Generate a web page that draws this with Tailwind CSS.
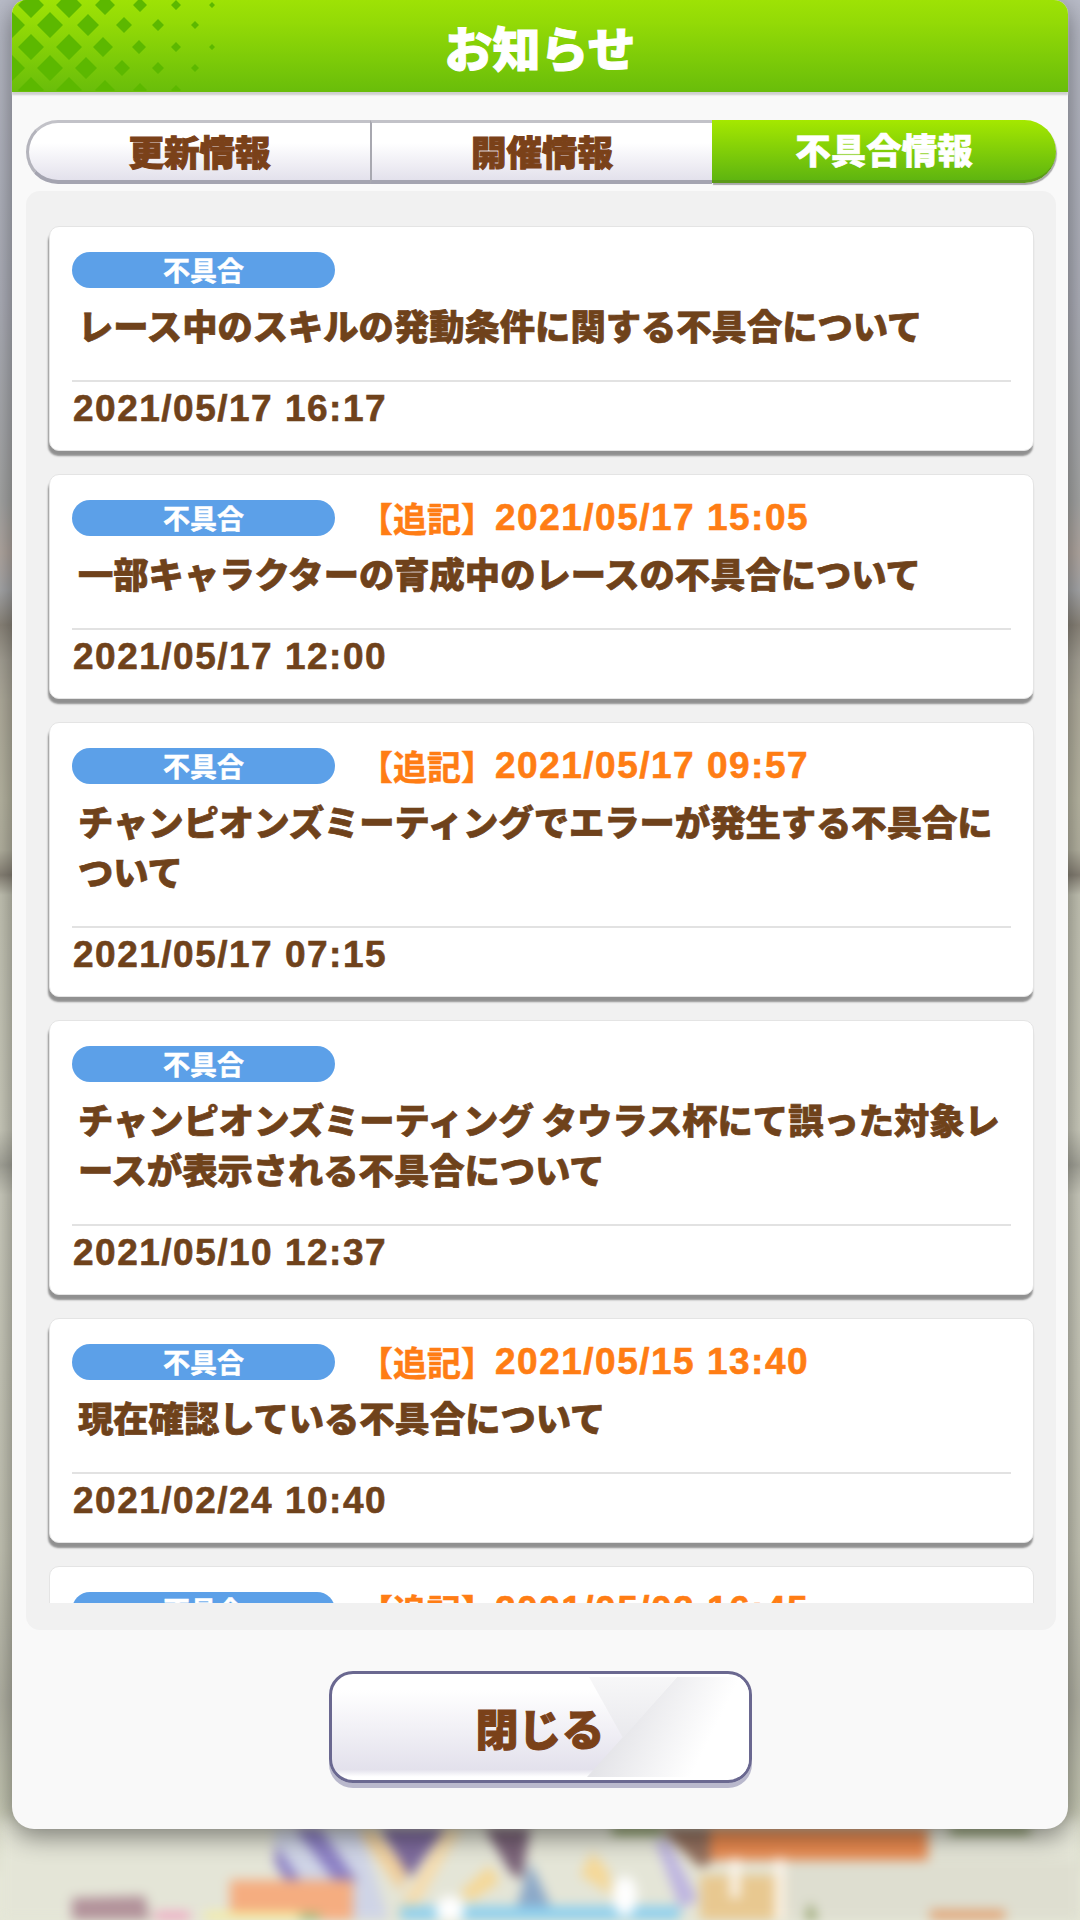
<!DOCTYPE html>
<html lang="ja">
<head>
  <meta charset="UTF-8">
  <title>お知らせ</title>
  <script src="https://cdn.jsdelivr.net/npm/@tailwindcss/browser@4"></script>
</head>
<body class="relative w-[1080px] h-[1920px] overflow-hidden font-['Noto_Sans_CJK_JP',sans-serif]">
  <!-- blurred game scene behind the dialog -->
  <div class="absolute inset-0 bg-[linear-gradient(to_bottom,#b9bcc8_0,#b0b2bc_300px,#a8a9a8_500px,#b5aba4_553px,#a9aaac_590px,#8d877c_625px,#a8a498_660px,#b4b0a0_700px,#bcbaa6_800px,#b8b6a4_850px,#8a8478_875px,#c8c8b8_895px,#cfcfc0_1130px,#a9a99e_1165px,#d0d0c2_1195px,#c8c8b8_1550px,#b6b6a8_1700px,#c6c8b4_1800px,#e6e8d8_1880px)]"></div>
  <svg class="absolute left-0 top-[1820px] blur-[6px]" width="1080" height="100" viewBox="0 0 1080 100">
    <rect x="-20" width="1120" height="120" fill="#e4e5d7"/>
    <rect x="780" y="40" width="300" height="80" fill="#deded0"/>
    <polygon points="275,8 360,8 392,110 345,110 290,62 275,42" fill="#cfd4e6"/>
    <polygon points="295,8 320,8 358,62 335,62" fill="#8c80c4"/>
    <polygon points="275,24 302,62 287,62 275,44" fill="#8c80c4"/>
    <polygon points="358,10 375,10 408,52 400,72" fill="#f0cf9c"/>
    <polygon points="380,8 445,8 410,58" fill="#7d6a9c"/>
    <polygon points="445,8 462,8 412,95 395,95" fill="#f5dcae"/>
    <polygon points="485,8 530,8 522,60 510,52" fill="#7a6378"/>
    <polygon points="530,42 510,110 562,110" fill="#8ba8c8"/>
    <polygon points="490,45 500,62 470,82 460,72" fill="#f5d898"/>
    <polygon points="592,32 608,50 612,75 580,55" fill="#f5d898"/>
    <polygon points="655,20 668,20 698,80 680,88" fill="#bdb4e0"/>
    <polygon points="660,8 722,8 712,42 700,48" fill="#93705e"/>
    <rect x="710" y="8" width="218" height="32" fill="#e88a50"/>
    <rect x="700" y="55" width="86" height="55" fill="#e8c890"/>
    <rect x="730" y="38" width="10" height="40" fill="#fbf4ea"/>
    <rect x="775" y="38" width="10" height="72" fill="#fbf4ea"/>
    <polygon points="230,60 353,60 353,110 230,94" fill="#f5ad80"/>
    <polygon points="72,78 145,76 152,110 72,110" fill="#b2929a"/>
    <rect x="400" y="86" width="280" height="24" fill="#8ccfee"/>
    <ellipse cx="450" cy="90" rx="14" ry="14" fill="#fff"/>
    <ellipse cx="625" cy="76" rx="12" ry="20" fill="#fff"/>
    <rect x="612" y="6" width="50" height="8" fill="#7a9050"/>
    <rect x="950" y="6" width="80" height="8" fill="#7d8f5a"/>
    <rect x="155" y="92" width="35" height="18" fill="#f0a0c0"/>
    <rect x="205" y="92" width="95" height="18" fill="#f5eda0"/>
    <rect x="300" y="94" width="20" height="16" fill="#8dbb70"/>
    <rect x="930" y="90" width="75" height="20" fill="#e0a070"/>
    <polygon points="810,82 822,110 803,110" fill="#8a9a60"/>
  </svg>

  <!-- dialog -->
  <div class="relative ml-[12px] w-[1056px] h-[1829px] bg-[#f9f9f9] rounded-b-[22px] rounded-t-[14px] flex flex-col shadow-[0_8px_26px_rgba(0,0,0,0.45)]">
    <div class="relative h-[92px] shrink-0 rounded-t-[14px] overflow-hidden flex items-center justify-center bg-[linear-gradient(to_bottom,#9ee205_0,#93da06_25%,#69bd0a_100%)] shadow-[0_3px_2px_#cfcfcf]">
      <svg class="absolute left-0 top-0" width="230" height="91" viewBox="12 0 230 91" fill="#5cb800">
        <path d="M31 -8l13 13-13 13-13-13zM69 -8l13 13-13 13-13-13zM105 -5l10 10-10 10-10-10zM140 -2l7 7-7 7-7-7zM176 0l5 5-5 5-5-5zM212 2l3 3-3 3-3-3z"/>
        <path d="M12 12l13 13-13 13-13-13zM50 12l13 13-13 13-13-13zM88 14l11 11-11 11-11-11zM124 17l8 8-8 8-8-8zM158 19l6 6-6 6-6-6zM195 21l4 4-4 4-4-4z"/>
        <path d="M31 34l13 13-13 13-13-13zM69 34l13 13-13 13-13-13zM103 37l10 10-10 10-10-10zM139 40l7 7-7 7-7-7zM176 42l5 5-5 5-5-5zM212 44l3 3-3 3-3-3z"/>
        <path d="M12 55l13 13-13 13-13-13zM50 55l13 13-13 13-13-13zM86 57l11 11-11 11-11-11zM122 60l8 8-8 8-8-8zM158 62l6 6-6 6-6-6zM195 64l4 4-4 4-4-4z"/>
        <path d="M31 77l13 13-13 13-13-13zM69 77l13 13-13 13-13-13zM105 80l10 10-10 10-10-10zM140 83l7 7-7 7-7-7zM176 85l5 5-5 5-5-5z"/>
      </svg>
      <h1 class="relative text-[48px] font-black text-white leading-none [-webkit-text-stroke:1px_#fff]">お知らせ</h1>
    </div>

    <!-- tabs -->
    <div class="mt-[28px] ml-[14px] mr-[12px] h-[64px] shrink-0 flex text-[35.5px] font-black leading-none">
      <div class="w-[344px] pb-[2px] flex items-center justify-center rounded-l-full border-t-[3px] border-b-[4px] border-l-[3px] border-t-[#c2c2c8] border-b-[#a4a4b0] border-l-[#b4b4bc] bg-[linear-gradient(to_bottom,#fff_35%,#e3e1ec_100%)] text-[#7a4119] [-webkit-text-stroke:1px_#7a4119]">更新情報</div>
      <div class="w-[342px] pb-[2px] flex items-center justify-center border-l-2 border-t-[3px] border-b-[4px] border-l-[#a8a8b0] border-t-[#c2c2c8] border-b-[#a4a4b0] bg-[linear-gradient(to_bottom,#fff_35%,#e3e1ec_100%)] text-[#7a4119] [-webkit-text-stroke:1px_#7a4119]">開催情報</div>
      <div class="w-[344px] h-[63px] pb-[2px] flex items-center justify-center rounded-r-full border-b-[3px] border-b-[#5b9a18] bg-[linear-gradient(to_bottom,#a5e800_0,#5fb510_100%)] text-white shadow-[1px_2px_1px_#a8a8a8] [-webkit-text-stroke:0.6px_#fff]">不具合情報</div>
    </div>

    <!-- notice list -->
    <div class="mt-[7px] ml-[14px] mr-[12px] h-[1439px] shrink-0 rounded-[14px] bg-[#f1f1f1]">
      <div class="h-[1412px] overflow-hidden pt-[35px] pl-[23px] pr-[22px] flex flex-col gap-[23px]">

        <article class="shrink-0 h-[225px] px-[22px] pt-[25px] rounded-[10px] bg-white border border-[#e4e4e4] shadow-[-1px_5px_2px_rgba(0,0,0,0.4)]">
          <div class="flex h-[36px] items-center">
            <span class="w-[263px] h-[36px] pb-[2px] rounded-full bg-[#5ca0e8] flex items-center justify-center text-white text-[27px] font-bold leading-none [-webkit-text-stroke:0.5px_#fff]">不具合</span>
          </div>
          <p class="mt-[12px] h-[80px] pl-[6px] text-[#6f421b] text-[35.3px] leading-[50px] font-black [-webkit-text-stroke:0.7px_#6f421b]">レース中のスキルの発動条件に関する不具合について</p>
          <p class="border-t-2 border-[#e2e2e2] h-[54px] pl-[1px] font-['Liberation_Sans',sans-serif] text-[#6f421b] text-[37px] tracking-[1.5px] font-bold leading-[54px] [-webkit-text-stroke:0.6px_#6f421b]">2021/05/17 16:17</p>
        </article>

        <article class="shrink-0 h-[225px] px-[22px] pt-[25px] rounded-[10px] bg-white border border-[#e4e4e4] shadow-[-1px_5px_2px_rgba(0,0,0,0.4)]">
          <div class="flex h-[36px] items-center">
            <span class="w-[263px] h-[36px] pb-[2px] rounded-full bg-[#5ca0e8] flex items-center justify-center text-white text-[27px] font-bold leading-none [-webkit-text-stroke:0.5px_#fff]">不具合</span>
            <span class="ml-[24px] pb-[1px] text-[#ff7d14] text-[34px] font-bold leading-none whitespace-nowrap [-webkit-text-stroke:0.5px_#ff7d14]">【追記】</span>
            <span class="pb-[1px] font-['Liberation_Sans',sans-serif] text-[#ff7d14] text-[37px] tracking-[1.5px] font-bold leading-none whitespace-nowrap [-webkit-text-stroke:0.6px_#ff7d14]">2021/05/17 15:05</span>
          </div>
          <p class="mt-[12px] h-[80px] pl-[6px] text-[#6f421b] text-[35.3px] leading-[50px] font-black [-webkit-text-stroke:0.7px_#6f421b]">一部キャラクターの育成中のレースの不具合について</p>
          <p class="border-t-2 border-[#e2e2e2] h-[54px] pl-[1px] font-['Liberation_Sans',sans-serif] text-[#6f421b] text-[37px] tracking-[1.5px] font-bold leading-[54px] [-webkit-text-stroke:0.6px_#6f421b]">2021/05/17 12:00</p>
        </article>

        <article class="shrink-0 h-[275px] px-[22px] pt-[25px] rounded-[10px] bg-white border border-[#e4e4e4] shadow-[-1px_5px_2px_rgba(0,0,0,0.4)]">
          <div class="flex h-[36px] items-center">
            <span class="w-[263px] h-[36px] pb-[2px] rounded-full bg-[#5ca0e8] flex items-center justify-center text-white text-[27px] font-bold leading-none [-webkit-text-stroke:0.5px_#fff]">不具合</span>
            <span class="ml-[24px] pb-[1px] text-[#ff7d14] text-[34px] font-bold leading-none whitespace-nowrap [-webkit-text-stroke:0.5px_#ff7d14]">【追記】</span>
            <span class="pb-[1px] font-['Liberation_Sans',sans-serif] text-[#ff7d14] text-[37px] tracking-[1.5px] font-bold leading-none whitespace-nowrap [-webkit-text-stroke:0.6px_#ff7d14]">2021/05/17 09:57</span>
          </div>
          <p class="mt-[12px] h-[130px] pl-[6px] text-[#6f421b] text-[35.3px] leading-[50px] font-black whitespace-nowrap [-webkit-text-stroke:0.7px_#6f421b]">チャンピオンズミーティングでエラーが発生する不具合に<br>ついて</p>
          <p class="border-t-2 border-[#e2e2e2] h-[54px] pl-[1px] font-['Liberation_Sans',sans-serif] text-[#6f421b] text-[37px] tracking-[1.5px] font-bold leading-[54px] [-webkit-text-stroke:0.6px_#6f421b]">2021/05/17 07:15</p>
        </article>

        <article class="shrink-0 h-[275px] px-[22px] pt-[25px] rounded-[10px] bg-white border border-[#e4e4e4] shadow-[-1px_5px_2px_rgba(0,0,0,0.4)]">
          <div class="flex h-[36px] items-center">
            <span class="w-[263px] h-[36px] pb-[2px] rounded-full bg-[#5ca0e8] flex items-center justify-center text-white text-[27px] font-bold leading-none [-webkit-text-stroke:0.5px_#fff]">不具合</span>
          </div>
          <p class="mt-[12px] h-[130px] pl-[6px] text-[#6f421b] text-[35.3px] leading-[50px] font-black whitespace-nowrap [-webkit-text-stroke:0.7px_#6f421b]">チャンピオンズミーティング タウラス杯にて誤った対象レ<br>ースが表示される不具合について</p>
          <p class="border-t-2 border-[#e2e2e2] h-[54px] pl-[1px] font-['Liberation_Sans',sans-serif] text-[#6f421b] text-[37px] tracking-[1.5px] font-bold leading-[54px] [-webkit-text-stroke:0.6px_#6f421b]">2021/05/10 12:37</p>
        </article>

        <article class="shrink-0 h-[225px] px-[22px] pt-[25px] rounded-[10px] bg-white border border-[#e4e4e4] shadow-[-1px_5px_2px_rgba(0,0,0,0.4)]">
          <div class="flex h-[36px] items-center">
            <span class="w-[263px] h-[36px] pb-[2px] rounded-full bg-[#5ca0e8] flex items-center justify-center text-white text-[27px] font-bold leading-none [-webkit-text-stroke:0.5px_#fff]">不具合</span>
            <span class="ml-[24px] pb-[1px] text-[#ff7d14] text-[34px] font-bold leading-none whitespace-nowrap [-webkit-text-stroke:0.5px_#ff7d14]">【追記】</span>
            <span class="pb-[1px] font-['Liberation_Sans',sans-serif] text-[#ff7d14] text-[37px] tracking-[1.5px] font-bold leading-none whitespace-nowrap [-webkit-text-stroke:0.6px_#ff7d14]">2021/05/15 13:40</span>
          </div>
          <p class="mt-[12px] h-[80px] pl-[6px] text-[#6f421b] text-[35.3px] leading-[50px] font-black [-webkit-text-stroke:0.7px_#6f421b]">現在確認している不具合について</p>
          <p class="border-t-2 border-[#e2e2e2] h-[54px] pl-[1px] font-['Liberation_Sans',sans-serif] text-[#6f421b] text-[37px] tracking-[1.5px] font-bold leading-[54px] [-webkit-text-stroke:0.6px_#6f421b]">2021/02/24 10:40</p>
        </article>

        <article class="shrink-0 h-[225px] px-[22px] pt-[25px] rounded-[10px] bg-white border border-[#e4e4e4]">
          <div class="flex h-[36px] items-center">
            <span class="w-[263px] h-[36px] pb-[2px] rounded-full bg-[#5ca0e8] flex items-center justify-center text-white text-[27px] font-bold leading-none [-webkit-text-stroke:0.5px_#fff]">不具合</span>
            <span class="ml-[24px] pb-[1px] text-[#ff7d14] text-[34px] font-bold leading-none whitespace-nowrap [-webkit-text-stroke:0.5px_#ff7d14]">【追記】</span>
            <span class="pb-[1px] font-['Liberation_Sans',sans-serif] text-[#ff7d14] text-[37px] tracking-[1.5px] font-bold leading-none whitespace-nowrap [-webkit-text-stroke:0.6px_#ff7d14]">2021/05/02 16:45</span>
          </div>
        </article>
      </div>
    </div>

    <!-- close button -->
    <button class="relative mt-[41px] mx-auto w-[423px] h-[112px] rounded-[24px] border-[3px] border-[#6a6890] shadow-[0_5px_0_#b9b8cc] overflow-hidden flex items-center justify-center bg-[linear-gradient(to_bottom,#fff_15%,#e3e1ec_90%,#fff_97%)]">
      <svg class="absolute left-0 top-0" width="417" height="106" viewBox="0 0 417 106">
        <defs>
          <linearGradient id="sheen" x1="290" y1="40" x2="370" y2="80" gradientUnits="userSpaceOnUse">
            <stop offset="0" stop-color="#e4e4e8"/>
            <stop offset="1" stop-color="#fff"/>
          </linearGradient>
          <linearGradient id="fold" x1="0" y1="0" x2="0" y2="1">
            <stop offset="0" stop-color="#f7f7f8"/>
            <stop offset="1" stop-color="#e9e9ed"/>
          </linearGradient>
        </defs>
        <polygon points="345,3 417,3 417,103 255,103" fill="url(#sheen)"/>
        <polygon points="257,3 345,3 291,64" fill="url(#fold)"/>
      </svg>
      <span class="relative text-[43px] font-black text-[#7a4119] leading-none [-webkit-text-stroke:1px_#7a4119]">閉じる</span>
    </button>
  </div>
</body>
</html>
